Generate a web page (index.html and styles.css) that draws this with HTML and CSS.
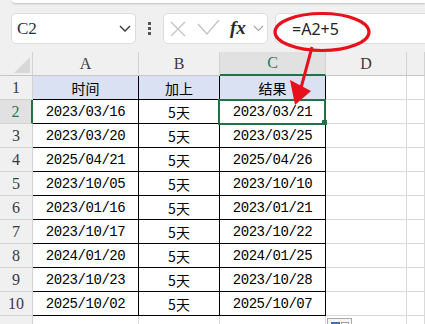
FILE: index.html
```html
<!DOCTYPE html>
<html lang="zh">
<head>
<meta charset="utf-8">
<link rel="stylesheet" href="styles.css">
</head>
<body>
<div class="topcard"></div>
<div class="fbar">
  <div class="namebox">
    <span class="ref">C2</span>
    <svg class="chev" width="12" height="7" viewBox="0 0 12 7"><path d="M1 1 L6 6 L11 1" fill="none" stroke="#333" stroke-width="1.3"/></svg>
  </div>
  <div class="dots"><i></i><i></i><i></i></div>
  <div class="fnbox">
    <svg class="ico-x" width="16" height="16" viewBox="0 0 16 16"><path d="M1 1 L15 15 M15 1 L1 15" stroke="#c4c4c4" stroke-width="1.4" fill="none"/></svg>
    <svg class="ico-ok" width="23" height="17" viewBox="0 0 23 17"><path d="M1 5 L10 15 L22 1" stroke="#c4c4c4" stroke-width="1.4" fill="none"/></svg>
    <span class="fx">fx</span>
    <svg class="ico-dd" width="11" height="7" viewBox="0 0 11 7"><path d="M1 1 L5.5 5.5 L10 1" fill="none" stroke="#a8a8a8" stroke-width="1.2"/></svg>
  </div>
  <div class="formula">=A2+5</div>
</div>

<div class="sheet">
  <div class="c hd corner"><i class="tri"></i></div>
  <div class="c hd">A</div>
  <div class="c hd">B</div>
  <div class="c hd act">C</div>
  <div class="c hd">D</div>
  <div class="c hd"></div>

  <div class="c rh">1</div>
  <div class="c t blue zh">时间</div>
  <div class="c t blue zh">加上</div>
  <div class="c t blue zh">结果</div>
  <div class="c"></div><div class="c"></div>

  <div class="c rh act">2</div>
  <div class="c t date">2023/03/16</div>
  <div class="c t zh">5天</div>
  <div class="c t date sel">2023/03/21<i class="handle"></i></div>
  <div class="c"></div><div class="c"></div>

  <div class="c rh">3</div>
  <div class="c t date">2023/03/20</div>
  <div class="c t zh">5天</div>
  <div class="c t date">2023/03/25</div>
  <div class="c"></div><div class="c"></div>

  <div class="c rh">4</div>
  <div class="c t date">2025/04/21</div>
  <div class="c t zh">5天</div>
  <div class="c t date">2025/04/26</div>
  <div class="c"></div><div class="c"></div>

  <div class="c rh">5</div>
  <div class="c t date">2023/10/05</div>
  <div class="c t zh">5天</div>
  <div class="c t date">2023/10/10</div>
  <div class="c"></div><div class="c"></div>

  <div class="c rh">6</div>
  <div class="c t date">2023/01/16</div>
  <div class="c t zh">5天</div>
  <div class="c t date">2023/01/21</div>
  <div class="c"></div><div class="c"></div>

  <div class="c rh">7</div>
  <div class="c t date">2023/10/17</div>
  <div class="c t zh">5天</div>
  <div class="c t date">2023/10/22</div>
  <div class="c"></div><div class="c"></div>

  <div class="c rh">8</div>
  <div class="c t date">2024/01/20</div>
  <div class="c t zh">5天</div>
  <div class="c t date">2024/01/25</div>
  <div class="c"></div><div class="c"></div>

  <div class="c rh">9</div>
  <div class="c t date">2023/10/23</div>
  <div class="c t zh">5天</div>
  <div class="c t date">2023/10/28</div>
  <div class="c"></div><div class="c"></div>

  <div class="c rh">10</div>
  <div class="c t date">2025/10/02</div>
  <div class="c t zh">5天</div>
  <div class="c t date">2025/10/07</div>
  <div class="c"></div><div class="c"></div>

  <div class="c rh"></div>
  <div class="c"></div><div class="c"></div><div class="c"></div><div class="c"></div><div class="c"></div>
</div>

<div class="paste"><i class="pb"></i><i class="pw"></i></div>

<svg class="annot" width="425" height="324" viewBox="0 0 425 324">
  <ellipse cx="322" cy="32" rx="47" ry="18.5" fill="none" stroke="#e8111b" stroke-width="3.2"/>
  <line x1="312" y1="47" x2="301" y2="88" stroke="#e8111b" stroke-width="3"/>
  <polygon points="290,80 311,91 295,105" fill="#e8111b"/>
</svg>
</body>
</html>
```

FILE: styles.css
```css
body {
  margin: 0;
  width: 425px;
  height: 324px;
  overflow: hidden;
  position: relative;
  background: #f0f0f0;
  font-family: "Noto Sans CJK SC", "Noto Sans", sans-serif;
}

.topcard {
  height: 3px;
  margin-left: 12px;
  background: #fff;
  border-bottom-left-radius: 6px;
  box-shadow: 0 1px 2px rgba(0, 0, 0, 0.2);
}

.fbar {
  display: flex;
  height: 31px;
  margin-top: 10px;
}

.namebox {
  margin-left: 11px;
  width: 125px;
  box-sizing: border-box;
  background: #fff;
  border: 1px solid #dcdcdc;
  border-radius: 5px;
  display: flex;
  align-items: center;
  justify-content: space-between;
  padding: 0 4px 0 5px;
}

.ref {
  font-family: "Liberation Serif", serif;
  font-size: 17px;
  color: #243049;
}

.dots {
  width: 27px;
  display: flex;
  flex-direction: column;
  align-items: center;
  justify-content: center;
  gap: 2px;
}

.dots i {
  display: block;
  width: 3px;
  height: 3px;
  background: #555;
}

.fnbox {
  width: 105px;
  box-sizing: border-box;
  background: #fff;
  border: 1px solid #dcdcdc;
  border-radius: 5px;
  display: flex;
  align-items: center;
}

.ico-x { margin-left: 6px; }
.ico-ok { margin-left: 11px; margin-top: -2px; }

.fx {
  margin-left: 10px;
  font-family: "Liberation Serif", serif;
  font-style: italic;
  font-weight: bold;
  font-size: 19px;
  color: #2a2a2a;
  line-height: 1;
  margin-top: -2px;
}

.ico-dd { margin-left: 7px; }

.formula {
  margin-left: 7px;
  flex: 1;
  margin-right: -10px;
  background: #fff;
  border: 1px solid #dcdcdc;
  border-radius: 5px;
  display: flex;
  align-items: center;
  padding-left: 16px;
  font-family: "Noto Sans", sans-serif;
  font-size: 16px;
  color: #222;
}

.sheet {
  margin-top: 8px;
  display: grid;
  grid-template-columns: 33px 106px 81px 106px 81px 1fr;
  grid-auto-rows: 24px;
}

.c {
  box-sizing: border-box;
  border-right: 1px solid #dadada;
  border-bottom: 1px solid #dadada;
  background: #fff;
  display: flex;
  align-items: center;
  justify-content: center;
  color: #000;
}

.hd, .rh {
  background: #f0f0f0;
  border-right-color: #d2d2d2;
  border-bottom-color: #d2d2d2;
  font-family: "Liberation Serif", serif;
  font-size: 16px;
  color: #3a3a44;
}

.hd { border-bottom-color: #c6c6c6; }

.hd.act {
  background: #e1e1e1;
  color: #1f7a55;
  border-bottom: 2px solid #217346;
}

.rh.act {
  background: #e1e1e1;
  color: #1f7a55;
  border-right: 2px solid #217346;
}

.corner {
  align-items: flex-end;
  justify-content: flex-end;
  padding: 0 2px 2px 0;
}

.tri {
  display: block;
  width: 0;
  height: 0;
  border-left: 16px solid transparent;
  border-bottom: 16px solid #d8d8d8;
}

.t {
  border-right-color: #000;
  border-bottom-color: #000;
}

.blue { background: #d9e1f2; }

.zh {
  font-family: "Noto Sans CJK SC", sans-serif;
  font-size: 14px;
  font-weight: 400;
}

.date {
  font-family: "Liberation Mono", monospace;
  font-size: 14px;
  letter-spacing: -0.45px;
}

.sel { position: relative; }

.sel::after {
  content: "";
  position: absolute;
  left: -2px;
  top: -1px;
  right: -1px;
  bottom: -2px;
  border: 2px solid #217346;
}

.handle {
  position: absolute;
  right: -2px;
  bottom: -2px;
  width: 5px;
  height: 5px;
  background: #217346;
  z-index: 2;
}

.paste {
  position: absolute;
  left: 327px;
  top: 318px;
  width: 25px;
  height: 12px;
  box-sizing: border-box;
  border: 1px solid #aaa;
  background: #f6f6f6;
  display: flex;
  padding: 3px 0 0 3px;
  gap: 1px;
}

.pb {
  display: block;
  width: 9px;
  height: 8px;
  background: #3f6fc8;
}

.pw {
  display: block;
  width: 6px;
  height: 8px;
  border: 1px solid #999;
  background: #fff;
}

.annot {
  position: absolute;
  left: 0;
  top: 0;
  pointer-events: none;
}
```
